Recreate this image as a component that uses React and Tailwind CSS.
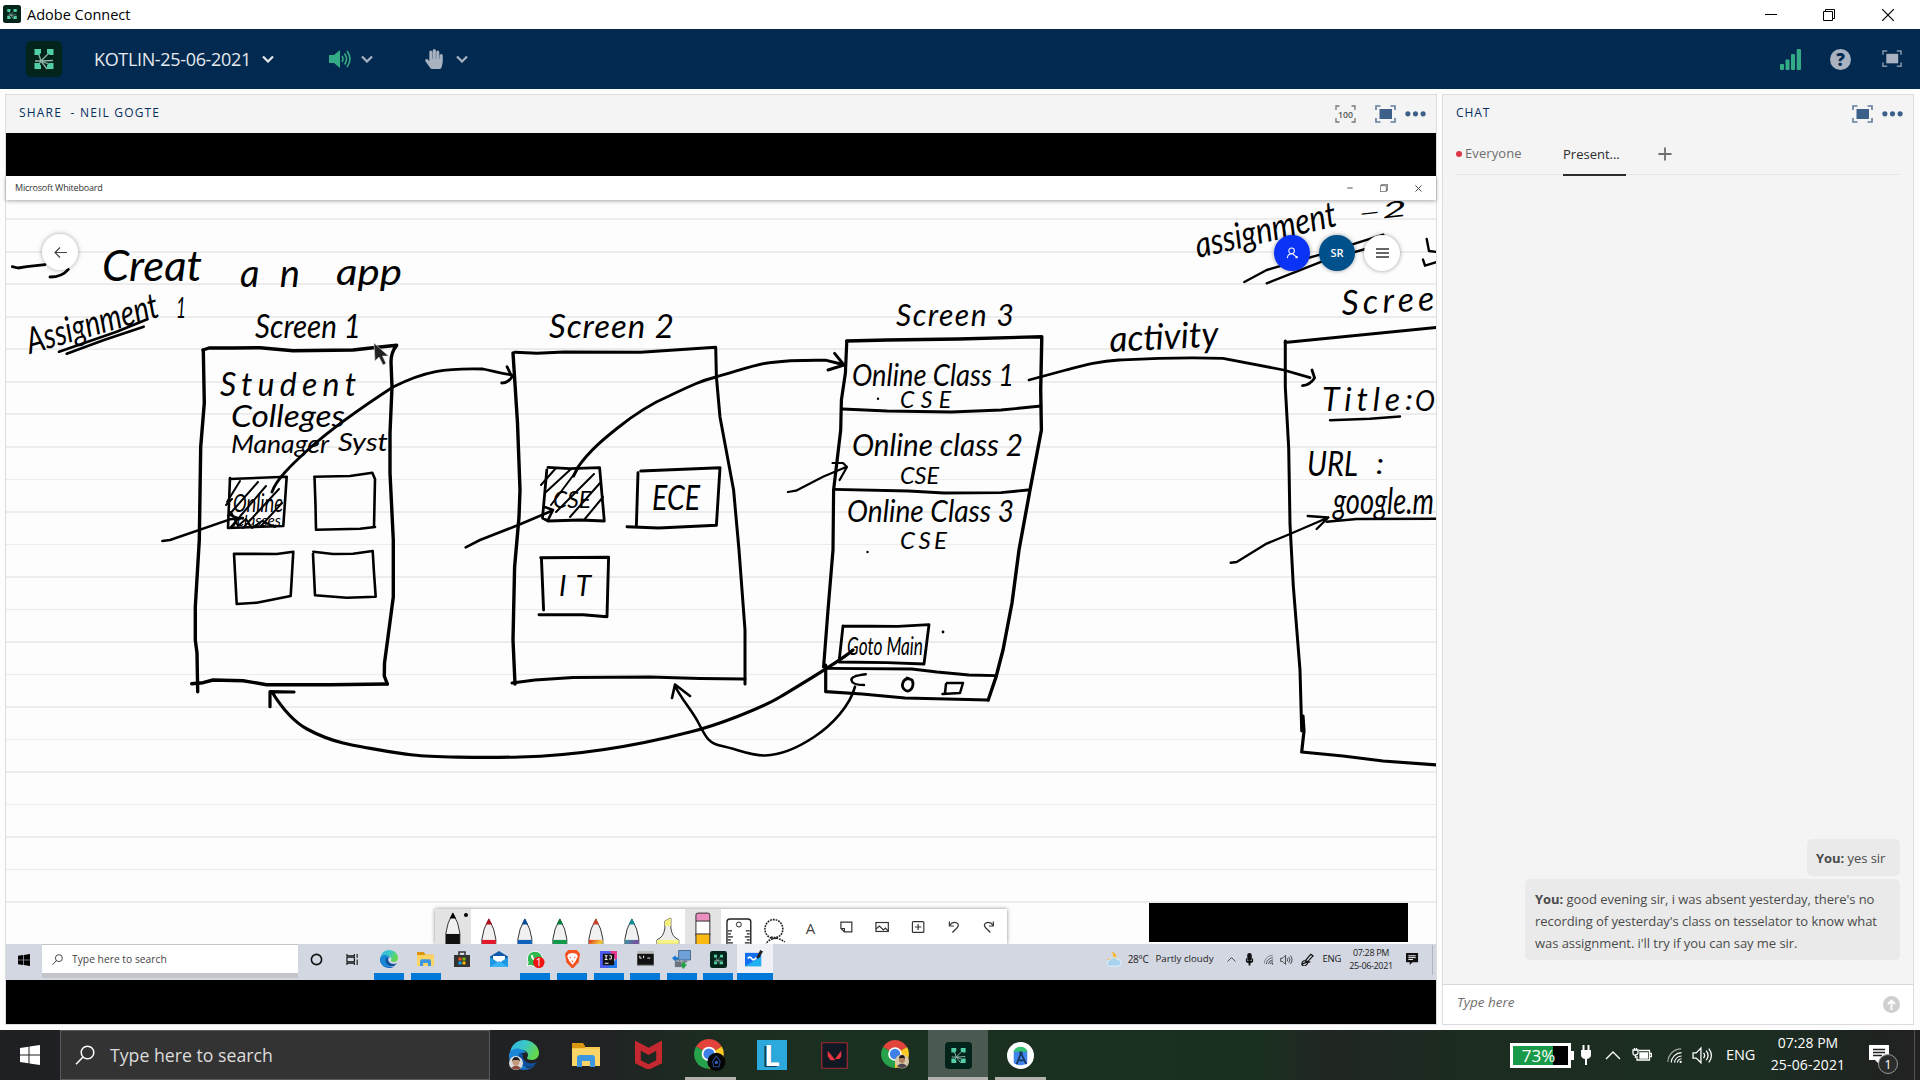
import React from "react";
import { Minus, X, Plus } from "lucide-react";
import { FaHandPaper } from "react-icons/fa";

/* ---------- shared icons ---------- */

function ConnectLogo({ className }) {
  return (
    <svg viewBox="0 0 36 36" className={className}>
      <rect width="36" height="36" rx="5" fill="#02241b" />
      <g stroke="#8fb5a8" strokeWidth="1.3" fill="none">
        <path d="M15 20L24 11M15 20L12 11M15 20L25 24M15 20L12 25M15 20L27 19.500M15 20H9M15 20L21 28" />
      </g>
      <g fill="#53cfa8">
        <path d="M8.500 8h6.500v4l-2 2H8.500z" />
        <path d="M21 8h6.500v6h-3.500l-3-2z" />
        <path d="M8.500 22h4l2.500 2.500V28H8.500z" />
        <path d="M21 24l2.500-2h4v6H21z" />
      </g>
    </svg>
  );
}

function Chevron({ className }) {
  return (
    <svg viewBox="0 0 12 8" className={className} fill="none" stroke="currentColor" strokeWidth="2.2">
      <path d="M1 1.5l5 5 5-5" />
    </svg>
  );
}

function Fullscreen({ className }) {
  return (
    <svg viewBox="0 0 21 18" className={className} fill="none" stroke="currentColor">
      <path strokeWidth="1.6" opacity="0.8" d="M5.500 1H1v4M15.500 1H20v4M5.500 17H1v-4M15.500 17H20v-4" />
      <rect x="4.500" y="4" width="12.500" height="10" fill="currentColor" stroke="none" />
    </svg>
  );
}

function Dots({ className }) {
  return (
    <svg viewBox="0 0 22 6" className={className} fill="currentColor">
      <circle cx="3" cy="3" r="2.700" />
      <circle cx="11" cy="3" r="2.700" />
      <circle cx="19" cy="3" r="2.700" />
    </svg>
  );
}

function Restore({ className }) {
  return (
    <svg viewBox="0 0 12 12" className={className} fill="none" stroke="currentColor">
      <path d="M.5 2.5h9v9h-9zM2.500 2.500v-2h9v9h-2" />
    </svg>
  );
}

function Windows({ className }) {
  return (
    <svg viewBox="0 0 20 20" className={className} fill="currentColor">
      <path d="M0 3l8.500-1.300v7.800H0zM9.500 1.500L20 0v9.500H9.500zM0 10.500h8.500v7.800L0 17zM9.500 10.500H20V20L9.500 18.500z" />
    </svg>
  );
}

function SearchGlyph({ className }) {
  return (
    <svg viewBox="0 0 20 20" className={className} fill="none" stroke="currentColor" strokeWidth="1.5">
      <circle cx="12.500" cy="7.500" r="6.300" />
      <path d="M8 12l-7 7.300" />
    </svg>
  );
}

function Speaker({ className }) {
  return (
    <svg viewBox="0 0 20 18" className={className} fill="none" stroke="currentColor" strokeWidth="1.2">
      <path d="M1 6.500h3L8.500 2v14L4 11.500H1z" />
      <path d="M11 6.500q2 2.500 0 5M13.500 4.500q3.600 4.500 0 9M16 2.500q5 6.500 0 13" />
    </svg>
  );
}

function Wifi({ className }) {
  return (
    <svg viewBox="0 0 18 18" className={className} fill="none" stroke="currentColor" strokeWidth="1.2">
      <path d="M2 16A14 14 0 0 1 16 2" opacity="0.6" />
      <path d="M5.500 16.500A11 11 0 0 1 16.500 6M9 16.500A8 8 0 0 1 16.500 9.500M12 16.500a5 5 0 0 1 4.500-4" />
      <circle cx="15.500" cy="15.800" r="1.200" fill="currentColor" stroke="none" />
    </svg>
  );
}

function Caret({ className }) {
  return (
    <svg viewBox="0 0 16 9" className={className} fill="none" stroke="currentColor" strokeWidth="1.4">
      <path d="M1 8l7-7 7 7" />
    </svg>
  );
}

function Edge({ className }) {
  return (
    <svg viewBox="0 0 30 30" className={className}>
      <defs>
        <linearGradient id="edgeA" x1="0" y1="0" x2="1" y2="0.4">
          <stop offset="0" stopColor="#2fb5e8" />
          <stop offset="0.55" stopColor="#3cc8c4" />
          <stop offset="1" stopColor="#63d84c" />
        </linearGradient>
      </defs>
      <path d="M1 13C2 5 8 0 15 0c8 0 15 6 15 13 0 4-3 7-7 7-3 0-5-1-5-2 0-1 1-1 1-3 0-3-3-5-7-5-5 0-9 2-11 3z" fill="url(#edgeA)" />
      <path d="M0 15c1-5 6-7 11-6-4 2-5 6-4 10 1 6 6 10 12 9 3 0 6-2 8-4-3 4-7 6-12 6C6 30 0 23 0 15z" fill="#1769c4" />
      <path d="M0 15c1-5 6-7 11-6 3 .5 5 2 6 4-4-1-7 1-7 5 0 5 4 9 9 9-8 4-19-1-19-12z" fill="#1c86d6" />
      <path d="M10 14c-2 5 0 12 9 13 4 0 7-2 9-5-4 2-9 2-12-1-2-2-3-5-2-7 0 0-3-2-4 0z" fill="#0f4f9f" />
    </svg>
  );
}

function Folder({ className }) {
  return (
    <svg viewBox="0 0 28 24" className={className}>
      <path d="M0 1h11l2 3h15v19H0z" fill="#f7c84a" />
      <path d="M0 0h11l2 3v2H0z" fill="#d9960f" />
      <path d="M0 6h28v17H0z" fill="#fcd568" />
      <path d="M5 24V15q0-3 3-3h12q3 0 3 3v9h-5v-6h-8v6z" fill="#3d96e0" />
    </svg>
  );
}

function Chrome({ className, badge }) {
  return (
    <svg viewBox="0 0 30 30" className={className}>
      <path d="M14 14L1.900 7A14 14 0 0 1 26.100 7z" fill="#e2433a" />
      <path d="M14 14l12.100-7A14 14 0 0 1 14 28z" fill="#fbc924" />
      <path d="M14 14v14A14 14 0 0 1 1.900 7z" fill="#27a14c" />
      <circle cx="14" cy="14" r="6.800" fill="#fff" />
      <circle cx="14" cy="14" r="5.200" fill="#3f7fe8" />
      {badge}
    </svg>
  );
}

/* ---------- whiteboard drawing ---------- */

const strokes = [
  // frame of the first phone screen
  ["M203 350L209 348L233 348L260 347.700L293 350.700L353 350L373 347.700L396.700 345.300Q391 352 391 362L392 387L390 433L390 473L393.300 540L393.300 597L388 637L384.500 663L384.300 676L387.300 684", 3.4],
  ["M203.300 350L204.300 403L200.700 447L199.300 540L195.300 607L195.300 640L197 653L197.700 691.700", 3.4],
  ["M191.700 683.700L203 682.700L213 680L243 680.700L266.700 684.700L330 684.700L387.300 684", 3.4],
  ["M229.700 479L286.700 476.700L283.300 526L228 528L230 478", 2.6],
  ["M314.300 476.700L350 476L372.300 472.700L375 479L374 527.300M375 527L360 528.700L316 529.700L315.500 505L314.500 477", 2.6],
  ["M234 553.700L276.700 554L293.300 551.700L290.700 596L256.700 602.700L236.700 604L234 553.700", 2.6],
  ["M313.300 551.700L333 554L353 553.700L372.700 551L374 573L375.700 596.700L346.700 597.700L315 595.300L313 554", 2.6],
  ["M227 502L240 481M228 516L258 482M231 527L266 486M243 528L279 489M260 527L282 503M226 505L232 499M231 512L238 526L246 519L252 528L262 521L275 527", 2],
  // tap arrow and link to the second screen
  ["M162.300 541L170 540L230 519.300L243 518M230 515L238 518L233 526", 2.4],
  ["M272 492C276 480 290 466 310 448S350 415 393 387C425 371 445 368 483 369C493 371 500 373 511.700 375M507 366.700L512 377Q508 383 501.700 383", 2.8],
  // second screen
  ["M515 352.300L537 353.300L564 352L640.700 352.300L715.700 347.300L716.400 377L720 417L733.600 490L739 550L745 630L745 684", 3],
  ["M513 353L517.500 423L520 490L519 517L514.600 567L513 640L515 684", 3.4],
  ["M512 683L535 680L573 677.500L650 677L700 678.500L745 679", 3],
  ["M548 467.300L569.300 468.700L599.600 467.700L604.300 521L580 520L548 521L542.500 518L546.800 470", 2.8],
  ["M541 485L556 468M546 492L571 469M551 505L578 469M556 512L594 474M570 517L600 483M584 520L603 497", 2],
  ["M640.700 471L720 467.700L716.400 525.300L658.600 528L627 526.700M638 472.700L636.400 525", 2.9],
  ["M540.700 557.700L608.600 557.300L607 616.700L583 614.700L539 614.700M541.400 557.700L543.600 610", 2.9],
  ["M465.700 547.300L480 540L518.300 525L552 510.700M544 506.700L553 510L548 520", 2.6],
  ["M573.600 476L578 467C590 450 605 438 617.500 428S650 404 669 396C690 386 700 381 716 377S755 364 769 362.700C790 360 805 360 826.400 360.300L841 364M834.600 353.300L844 365L828 370", 2.9],
  // third screen
  ["M846.800 341L887 340L958.600 339L1041.800 336.700L1040.700 390L1041.400 430L1030 490L1019 550L1012 603L1003 650L996 677L988.200 700", 3.4],
  ["M846.800 341L845.400 373L841.400 400L840.700 430L833.600 490L833 550L828 610L823.600 667M825.700 665L825.700 691.700L862 694L905 698L988 700", 3.2],
  ["M842.500 409L887 411L951 412L1001 410L1041 406M834 489.300L908.600 491L944 493L1001 492.700L1028 490M828 668.300L912 669L937 672L969 675L996 675.700", 2.800],
  ["M787.900 492L796 490.700L823 476.700L846.800 466.700M832.500 463L843 463L847 467L839.600 480", 2.2],
  ["M843 626L898 626.300L929 624.700L924 664L887 662.700L839 662L843 626", 2.8],
  ["M865.700 674.300Q851 676 851.400 680Q852 685 864 685M946 684L945 693M942.500 694L960 693L963 683L947 683", 2.5],
  ["M908.500 678.500C903 679 900 686 905 690S915 686 912 680L907 678", 2.8],
  // return links below the screens
  ["M853 650C842 660 800 685 780 697S715 726 690 732C620 750 560 756 520 757S430 757 413 755S355 746 343 743S318 735 307 729S285 713 272 692M270 706.700L270 691.700L294 692", 3.2],
  ["M855 686.700C850 706 832 725 814 737S780 755 765 755.500S737 749 722 746S705 735 698 722S682 700 675 686M672 698L675 684.500L690 696", 2.6],
  // link to the fourth screen
  ["M1029 380L1066 370C1085 365 1100 361 1119 360S1176 356.700 1223 358.300L1283.600 370L1310 377.700M1312 370L1314.600 378Q1310 385 1302.500 385.700", 2.8],
  ["M1285 342.600L1353 335.800L1437 327.300M1285.300 341L1285.300 387L1288.700 448L1290 524L1293.300 586L1300 670L1301.700 731", 3],
  ["M1303 716L1304 731L1301.700 752L1343 756L1383 761L1437 765", 3.2],
  ["M1230.700 562.700L1236.700 562L1266.700 543.600L1290 534L1328.300 517.500M1307.700 516L1328.300 517.500L1316.700 529", 2.4],
  ["M1326.700 521.800L1356.700 519L1437 518.700M1330 420.300L1370 418.800L1400 416.500", 2.4],
  ["M1244.300 282L1266.700 270L1320 254.600L1383.300 234.700M1266.700 283.300L1326.700 259.600L1373 247", 2.4],
  ["M1426.700 239L1429 251L1437 252M1423 259.600L1425 265.700L1437 262", 2.4],
  ["M59 351.700L116.700 331.700L147.300 319.300M66.700 353.700L104 340L143.700 326.700", 2.6],
  ["M12.300 266.700L18 268L26.700 266.700L45 264.700M68.300 269.300Q62 277 50 277", 2.8],
];

// word, x, baseline, width, size, rotation, spread letters instead of widening them
const words = [
  ["Creat", 102, 281, 100, 42, 0],
  ["an", 240, 287, 60, 38, 0, true],
  ["app", 336, 285, 66, 36, 0],
  ["Assignment", 30, 354, 136, 36, -16],
  ["1", 176, 318, 10, 28, 0],
  ["Screen 1", 255, 338, 106, 33, 0],
  ["Student", 220, 396, 136, 32, 0, true],
  ["Colleges", 231, 427, 114, 31, 0],
  ["Manager", 231, 453, 98, 26, 0],
  ["Syst", 338, 451, 50, 26, 0],
  ["Online", 233, 512, 50, 26, 0],
  ["classes", 237, 526, 44, 16, 0],
  ["Screen 2", 549, 338, 125, 33, 0, true],
  ["CSE", 553, 508, 38, 24, 0],
  ["ECE", 652, 510, 48, 34, 0],
  ["IT", 559, 596, 32, 28, 0, true],
  ["Screen 3", 896, 326, 118, 30, 0, true],
  ["Online Class 1", 852, 386, 162, 30, 0],
  ["CSE", 900, 408, 51, 23, 0, true],
  ["Online class 2", 852, 456, 171, 30, 0],
  ["CSE", 900, 484, 39, 23, 0],
  ["Online Class 3", 847, 522, 167, 30, 0],
  ["CSE", 900, 549, 47, 24, 0, true],
  ["Goto Main", 847, 655, 76, 26, 0],
  ["activity", 1110, 352, 109, 36, -3],
  ["Scree", 1342, 315, 93, 34, -3, true],
  ["Title", 1322, 411, 78, 32, 0, true],
  [":", 1405, 410, 8, 28, 0],
  ["O", 1415, 411, 20, 28, 0],
  ["URL", 1307, 476, 51, 34, 0],
  [":", 1376, 474, 8, 28, 0],
  ["google.m", 1333, 514, 101, 36, 0],
  ["assignment", 1198, 258, 144, 36, -13],
  ["–2", 1358, 221, 50, 22, -6],
];

function Drawing() {
  return (
    <svg viewBox="6 200 1430 744" className="absolute inset-0 h-full w-full">
      <g fill="none" stroke="#000" strokeLinecap="round" strokeLinejoin="round">
        {strokes.map(([d, w], i) => (
          <path key={i} d={d} strokeWidth={w} />
        ))}
      </g>
      <g fontFamily="Lato, 'Open Sans', sans-serif" fontStyle="italic" fill="#000">
        {words.map(([t, x, y, w, size, r, spread], i) => (
          <text key={i} x={x} y={y} fontSize={size} textLength={w} lengthAdjust={spread ? "spacing" : "spacingAndGlyphs"} transform={`rotate(${r} ${x} ${y})`}>
            {t}
          </text>
        ))}
      </g>
      <circle cx="878" cy="398.700" r="1.200" />
      <circle cx="867.500" cy="552" r="1.200" />
      <circle cx="943" cy="632" r="1.400" />
      <path d="M374 343l1 18 4-4 4 8 3-1.500-3.500-7.500h6z" fill="#222" stroke="#ddd" strokeWidth="0.600" />
    </svg>
  );
}

/* ---------- whiteboard pen tray ---------- */

function Pen({ id, tip, band, tall }) {
  return (
    <svg viewBox="0 0 36 35" className="h-[35px] w-full">
      <defs>
        <linearGradient id={id} x1="0" y1="0" x2="1" y2="1">
          {band.map((c, i) => (
            <stop key={i} offset={band.length > 1 ? i / (band.length - 1) : 0} stopColor={c} />
          ))}
        </linearGradient>
      </defs>
      <g transform={tall ? "translate(0 -6)" : ""}>
        <path d="M11 45V30Q12 20 18 10Q24 20 25 30V45z" fill="#f1f1f1" stroke="#333" strokeWidth="1" />
        <path d="M14.800 15.500L18 9.300L21.200 15.500z" fill={tip} />
        <path d="M11 31h14v14H11z" fill={`url(#${id})`} />
      </g>
    </svg>
  );
}

const toolSvg = "h-[35px] w-full";
const tools = [
  { sel: true, el: <Pen id="p1" tip="#000" band={["#111"]} tall /> },
  { el: <Pen id="p2" tip="#b01020" band={["#e01a2b"]} /> },
  { el: <Pen id="p3" tip="#0a4d9a" band={["#0f62bb"]} /> },
  { el: <Pen id="p4" tip="#0a7a3a" band={["#119a4b"]} /> },
  { el: <Pen id="p5" tip="#c8452a" band={["#e03020", "#f3c83c", "#2b9a55"]} /> },
  { el: <Pen id="p6" tip="#148a98" band={["#31a0a0", "#74509c", "#4aa2c2"]} /> },
  {
    el: (
      <svg viewBox="0 0 36 35" className={toolSvg}>
        <path d="M15 19L15 12L21 9L21 19Q22 28 29 31V35H7V31Q14 28 15 19z" fill="#ededed" stroke="#444" />
        <path d="M15 17V12l6-3v8z" fill="#f5ef7b" />
        <path d="M7 31h22v4H7z" fill="#f8f585" />
      </svg>
    ),
  },
  {
    sel: true,
    el: (
      <svg viewBox="0 0 36 35" className={toolSvg} stroke="#333">
        <rect x="11" y="4" width="14" height="9" rx="2" fill="#ec8fc0" />
        <rect x="11" y="12" width="14" height="14" fill="#fff" />
        <rect x="11" y="25" width="14" height="14" fill="#fdb913" />
      </svg>
    ),
  },
  {
    el: (
      <svg viewBox="0 0 36 35" className={toolSvg} fill="none" stroke="#222" strokeWidth="1.400">
        <path d="M6 35V13q0-3 3-3h18q3 0 3 3v22" />
        <circle cx="18" cy="15.500" r="2.500" strokeWidth="1" />
        <path strokeWidth="1.200" d="M7 22h4M7 25h3M7 28h5M7 31h3M7 34h5M29 22h-4M29 25h-3M29 28h-5M29 31h-3M29 34h-5" />
      </svg>
    ),
  },
  {
    el: (
      <svg viewBox="0 0 36 35" className={toolSvg} fill="none" stroke="#222" strokeWidth="1.600">
        <path strokeDasharray="1.800 1" d="M20 29A9 9.500 0 1 1 24 26C20 30 12 29 9 35M14 28Q22 29 28 33" />
      </svg>
    ),
  },
  { el: <span className="pt-1 text-[15px] text-[#444]">A</span> },
  {
    el: (
      <svg viewBox="0 0 36 35" className={toolSvg} fill="none" stroke="#333" strokeWidth="1.200">
        <path d="M13 13h11v10H16.500l-3.500-3.500zM13 19.500h3.500V23" />
      </svg>
    ),
  },
  {
    el: (
      <svg viewBox="0 0 36 35" className={toolSvg} fill="none" stroke="#333" strokeWidth="1.200">
        <rect x="12" y="13.500" width="12.500" height="9" />
        <path d="M12 20l3.500-3 4 4 2-2 3 3" />
      </svg>
    ),
  },
  {
    el: (
      <svg viewBox="0 0 36 35" className={toolSvg} fill="none" stroke="#333" strokeWidth="1.200">
        <rect x="12.500" y="12.500" width="11.500" height="11" rx="1" />
        <path d="M15 18h6.500M18.250 15v6" />
      </svg>
    ),
  },
  {
    el: (
      <svg viewBox="0 0 36 35" className={toolSvg} fill="none" stroke="#333" strokeWidth="1.200">
        <path d="M13.500 12.500v4.500h4.500M13.500 16.500Q17 12 21 14T19 21L16.500 23.500" />
      </svg>
    ),
  },
  {
    el: (
      <svg viewBox="0 0 36 35" className={toolSvg} fill="none" stroke="#333" strokeWidth="1.200">
        <path d="M22.500 12.500v4.500h-4.500M22.500 16.500Q19 12 15 14T17 21L19.500 23.500" />
      </svg>
    ),
  },
];

/* ---------- shared desktop's task bar ---------- */

const sharedApps = [
  { el: <svg viewBox="0 0 14 14" className="size-[13px]" fill="none" stroke="#111" strokeWidth="1.700"><circle cx="7" cy="7" r="5.500" /></svg> },
  { el: <svg viewBox="0 0 14 14" className="size-[13px]" fill="none" stroke="#111" strokeWidth="1.200"><path d="M1 1v2h8V1M1 13v-2h8v2M1 4.500h8v5H1zM12 1v4M12 7v6" /></svg> },
  { on: true, el: <Edge className="size-[18px]" /> },
  { on: true, el: <Folder className="w-[17px]" /> },
  { el: <svg viewBox="0 0 18 18" className="size-[18px]"><path d="M6 5V2h6v3" fill="none" stroke="#333" strokeWidth="1.500" /><path d="M1 5h16v12H1z" fill="#333" /><path d="M5.500 7.500h3v3h-3z" fill="#f25022" /><path d="M9.500 7.500h3v3h-3z" fill="#7fba00" /><path d="M5.500 11.500h3v3h-3z" fill="#00a4ef" /><path d="M9.500 11.500h3v3h-3z" fill="#ffb900" /></svg> },
  { el: <svg viewBox="0 0 18 18" className="size-[18px]"><path d="M0 6.500L9 1l9 5.500V9H0z" fill="#0f5ca8" /><path d="M3 6h12v8H3z" fill="#fff" /><path d="M0 7l9 6 9-6v10H0z" fill="#1f98e4" /><path d="M0 17l9-6 9 6z" fill="#39b4f4" /></svg> },
  { on: true, el: <svg viewBox="0 0 20 20" className="size-[19px]"><path d="M1 17l1.300-4A8 8 0 1 1 5 16z" fill="#2fb84f" stroke="#fff" strokeWidth="1" /><path d="M5.500 5.500c1-1.500 2 0 2.300 1.300-.5 1-.5 1.200 1.500 2.700 1 .5 1.500-1 2.500-.5 1.500 1 2 2-.5 2.500-3 .5-7-3-5.800-6z" fill="#fff" /><circle cx="13.500" cy="13" r="6" fill="#f01212" /><text x="13.500" y="17" fontSize="11" fill="#fff" textAnchor="middle" fontFamily="Open Sans, sans-serif">1</text></svg> },
  { on: true, el: <svg viewBox="0 0 18 20" className="w-[17px]"><path d="M4.500 0h9L17 4l-1.500 9L9 20l-6.500-7L1 4z" fill="#f4511e" /><path d="M5 4l4-.8 4 .8 1.500 2.500-2 5-3.500 4.500-3.500-4.500-2-5z" fill="#fff" /><path d="M5.500 7l2 1-1 1zM12.500 7l-2 1 1 1zM7.500 11.500h3L9 13z" fill="#f4511e" /></svg> },
  { on: true, el: <svg viewBox="0 0 18 18" className="size-[17px]"><path d="M0 0h12v18H0z" fill="#4b5bf0" /><path d="M10 0h8v12z" fill="#e8378f" /><path d="M8 18h10V8z" fill="#1c7df0" /><path d="M3 3h12v12H3z" fill="#111" /><path d="M5 5h3M6.500 5v4M5 9h3M10 5h2v3.500H9.500M5 13h4" stroke="#fff" fill="none" /></svg> },
  { on: true, el: <svg viewBox="0 0 18 16" className="w-[17px]"><path d="M0 0h18v15H0z" fill="#111" stroke="#777" /><path d="M0 0h18v3H0z" fill="#bbb" /><path d="M3 5v2.500h2M7 5v2.500M11 7.500h3" stroke="#fff" fill="none" /></svg> },
  { on: true, el: <svg viewBox="0 0 20 20" className="size-[19px]"><path d="M7 .5h12.500v10H7z" fill="#6da1d8" stroke="#47678a" /><path d="M11 11h5v2h-5z" fill="#778" /><path d="M0 8.500l4-3v2h3v3H4v2z" fill="#1876d2" /><path d="M10 13h4v2h2l-4 5-4-5h2z" fill="#24a148" /><path d="M3 12h7v6H3z" fill="#6b7480" /><path d="M4.500 12q2-4 4 0" fill="none" stroke="#6b7480" strokeWidth="1.200" /></svg> },
  { on: true, el: <ConnectLogo className="size-[17px]" /> },
  { on: true, active: true, el: <svg viewBox="0 0 20 18" className="w-[19px]"><path d="M0 3h17v14H0z" fill="#116ff0" /><path d="M0 17L17 7v10z" fill="#22b1f0" /><path d="M3 9q2-3 4 0t5-1" fill="none" stroke="#fff" strokeWidth="1.800" /><path d="M12 8l4-8 3 1.500-4.500 7.500z" fill="#222" /></svg> },
];

function SharedTaskbar() {
  return (
    <div className="flex h-[36px] bg-[#d3d7e2] text-[#222]">
      <div className="flex w-[36px] items-center justify-center pb-[5px] text-black">
        <Windows className="size-[12px]" />
      </div>
      <div className="h-[34px] w-[256px] bg-[#c4c5c8]">
        <div className="mt-px flex h-[28px] items-center bg-white pl-[10px] pt-px">
          <SearchGlyph className="size-[11px]" />
          <span className="ml-[9px] text-[10.300px] text-[#444]">Type here to search</span>
        </div>
      </div>
      <div className="flex w-[475px] justify-between">
        {sharedApps.map((a, i) => (
          <div key={i} className={a.active ? "flex w-[36px] flex-col items-center bg-[#eef0f5]" : "flex w-[36px] flex-col items-center"}>
            <div className="flex h-[29px] items-center pt-px">{a.el}</div>
            {a.on && <div className={a.active ? "h-[7px] w-[36px] bg-[#0078d7]" : "h-[7px] w-[30px] bg-[#0078d7]"} />}
          </div>
        ))}
      </div>
      <div className="flex h-[31px] flex-1 items-center justify-end">
        <svg viewBox="0 0 18 16" className="w-[17px]"><circle cx="7" cy="5" r="5" fill="#f7b62a" /><circle cx="4.500" cy="3.500" r="4" fill="#d3d7e2" /><path d="M4 15a3.500 3.500 0 0 1 1-6.500 4.500 4.500 0 0 1 8-.5 3.500 3.500 0 0 1 1 7z" fill="#a9d3ee" stroke="#e6f3fb" /></svg>
        <span className="ml-[6px] text-[10px] tracking-[-0.300px]">28°C</span>
        <span className="ml-[7px] text-[9.700px]">Partly cloudy</span>
        <Caret className="ml-[13px] w-[9px]" />
        <svg viewBox="0 0 10 14" className="ml-[9px] w-[9px]" fill="#111"><rect x="2.500" width="5" height="9" rx="2.500" /><path d="M1 6h1.500v3h5V6H9v4L6 11.500V14H4v-2.500L1 10z" /></svg>
        <Wifi className="ml-[9px] w-[11px]" />
        <Speaker className="ml-[6px] w-[13px]" />
        <svg viewBox="0 0 14 14" className="ml-[8px] w-[13px]" fill="none" stroke="#111" strokeWidth="1.300"><path d="M4.500 8.500l6-7 2.500 1.500-6.500 7zM1 12.500q0-5 4-4t1 4-5 0q3-3 9-3" /></svg>
        <span className="ml-[9px] text-[9.500px] tracking-[-0.300px]">ENG</span>
        <div className="ml-[7px] flex w-[46px] flex-col items-center pb-[2px] text-[9px] leading-[13px] tracking-[-0.350px]">
          <span>07:28 PM</span>
          <span>25-06-2021</span>
        </div>
        <svg viewBox="0 0 14 13" className="ml-[12px] w-[13px]"><path d="M0 0h13v10H7l-3 3v-3H0z" fill="#111" /><path d="M2.500 3h8M2.500 5h8M2.500 7h5" stroke="#fff" /></svg>
        <div className="ml-[13px] mr-[3px] h-[30px] w-px bg-[#b0b4bf]" />
      </div>
    </div>
  );
}

/* ---------- panels ---------- */

function SharePod() {
  return (
    <section className="flex h-[931px] w-[1432px] flex-col border border-[#dcdcdc]">
      <header className="flex h-[38px] items-center bg-[#f4f4f4] pl-[13px] pr-[10px] text-[#06305f]">
        <span className="flex-1 whitespace-pre pb-[2px] text-[12px] font-medium tracking-[1.180px]">SHARE  - NEIL GOGTE</span>
        <svg viewBox="0 0 21 18" className="mr-[19px] w-[21px] text-[#777]" fill="none" stroke="currentColor">
          <path strokeWidth="1.300" d="M4.500 1H1v4M16.500 1H20v4M4.500 17H1v-4M16.500 17H20v-4" />
          <text x="10.500" y="12.500" textAnchor="middle" fontSize="9" textLength="15" lengthAdjust="spacingAndGlyphs" fontWeight="600" fill="#555" stroke="none">100</text>
        </svg>
        <Fullscreen className="mr-[9px] w-[21px] text-[#3c6089]" />
        <Dots className="w-[21px] text-[#3c6089]" />
      </header>
      <div className="h-[43px] bg-black" />
      <div className="z-10 flex h-[24px] items-center bg-white pl-[9px] pr-[12px] text-[#333] shadow-[0_1px_4px_rgba(0,0,0,0.350)]">
        <span className="flex-1 text-[9px] tracking-[-0.200px]">Microsoft Whiteboard</span>
        <Minus className="mr-[26px] size-[8px]" strokeWidth={2.500} />
        <Restore className="mr-[25px] size-[8px]" />
        <X className="size-[11px]" strokeWidth={2} />
      </div>
      <div className="relative h-[744px] overflow-hidden bg-[#fdfdfd] bg-[repeating-linear-gradient(to_bottom,transparent_0px,transparent_30.500px,#ececec_30.500px,#ececec_32.500px)] bg-[position:0_-12px]">
        <Drawing />
        <div className="absolute left-[36px] top-[34px] flex size-[36px] items-center justify-center rounded-full bg-white shadow-[0_0_5px_rgba(0,0,0,0.350)]">
          <svg viewBox="0 0 13 11" className="w-[13px]" fill="none" stroke="#444" strokeWidth="1.200"><path d="M13 5.500H1M6 .5l-5 5 5 5" /></svg>
        </div>
        <div className="absolute left-[1268px] top-[35px] flex gap-[9px]">
          <div className="flex size-[36px] items-center justify-center rounded-full bg-[#0a33f5] shadow-[0_0_4px_rgba(0,0,0,0.400)]">
            <svg viewBox="0 0 14 14" className="w-[12px]" fill="none" stroke="#fff" strokeWidth="1.200"><circle cx="6.500" cy="4.500" r="3.300" /><path d="M1.500 13q.5-5 5-5 2 0 3 1.500M9 9l4 3.500M11 12.500h2v-2" /></svg>
          </div>
          <div className="flex size-[36px] items-center justify-center rounded-full bg-[#00508c] text-[11px] font-semibold text-white shadow-[0_0_4px_rgba(0,0,0,0.400)]">SR</div>
          <div className="flex size-[36px] flex-col items-center justify-center gap-[2.500px] rounded-full bg-white shadow-[0_0_4px_rgba(0,0,0,0.400)]">
            <div className="h-[1.500px] w-[13px] bg-[#666]" />
            <div className="h-[1.500px] w-[13px] bg-[#666]" />
            <div className="h-[1.500px] w-[13px] bg-[#666]" />
          </div>
        </div>
        <div className="absolute bottom-0 left-[429px] grid w-[572px] grid-cols-16 bg-white shadow-[0_0_4px_rgba(0,0,0,0.450)]">
          {tools.map((t, i) => (
            <div key={i} className={t.sel ? "flex h-[35px] items-center justify-center overflow-hidden bg-[#e3e3e3]" : "flex h-[35px] items-center justify-center overflow-hidden"}>
              {t.el}
            </div>
          ))}
          <div className="absolute left-[29px] top-[4px] size-[4px] rounded-full bg-black" />
        </div>
        <div className="absolute bottom-[2px] left-[1143px] h-[39px] w-[259px] bg-black" />
      </div>
      <SharedTaskbar />
      <div className="flex-1 bg-black" />
    </section>
  );
}

function ChatPod() {
  return (
    <section className="flex h-[931px] w-[472px] flex-col border border-[#dcdcdc] bg-[#f4f4f4]">
      <header className="flex h-[38px] items-center pl-[13px] pr-[10px] text-[#06305f]">
        <span className="flex-1 pb-[2px] text-[12px] font-medium tracking-[0.900px]">CHAT</span>
        <Fullscreen className="mr-[9px] w-[21px] text-[#3c6089]" />
        <Dots className="w-[21px] text-[#3c6089]" />
      </header>
      <div className="mx-[13px] flex h-[42px] border-b border-[#e5e5e5] text-[13px]">
        <div className="flex w-[107px] items-center gap-[3px] pt-px text-[#6e6e6e]">
          <div className="size-[6px] rounded-full bg-[#dc3545]" />
          <span className="tracking-[0.100px]">Everyone</span>
        </div>
        <div className="flex h-[43px] w-[63px] items-center border-b-2 border-[#2c2c2c] pt-[2px] text-[#2c2c2c]">
          <span>Present...</span>
        </div>
        <div className="flex flex-1 items-center pl-[29px] pt-px text-[#6e6e6e]">
          <Plus className="size-[20px]" strokeWidth={2.200} />
        </div>
      </div>
      <div className="flex flex-1 flex-col items-end justify-end gap-[3px] pb-[24px] pr-[13px] text-[13px] leading-[22px] tracking-[-0.060px] text-[#4b4b4b]">
        <div className="flex h-[37px] w-[93px] items-center whitespace-nowrap rounded-[5px] bg-[#eaeaea] pl-[9px]">
          <p><b>You:</b> yes sir</p>
        </div>
        <div className="h-[81px] w-[375px] whitespace-nowrap rounded-[5px] bg-[#eaeaea] py-[9px] pl-[10px]">
          <p><b>You:</b> good evening sir, i was absent yesterday, there's no</p>
          <p>recording of yesterday's class on tesselator to know what</p>
          <p>was assignment. i'll try if you can say me sir.</p>
        </div>
      </div>
      <div className="flex h-[40px] items-center justify-between border-t border-[#d8d8d8] bg-white pl-[14px] pr-[13px] text-[13.500px] italic text-[#6e6e6e]">
        <span className="pb-[4px]">Type here</span>
        <div className="flex size-[17px] items-center justify-center rounded-full bg-[#cfcfcf]">
          <svg viewBox="0 0 9 11" className="w-[9px]" fill="none" stroke="#fff" strokeWidth="1.800"><path d="M4.500 11V2M1 5l3.500-3.500L8 5" /></svg>
        </div>
      </div>
    </section>
  );
}

/* ---------- local task bar ---------- */

const localApps = [
  { el: <div className="relative"><Edge className="size-[30px]" /><svg viewBox="0 0 14 14" className="absolute bottom-0 left-0 size-[14px]"><circle cx="7" cy="7" r="7" fill="#dcdcdc" /><circle cx="7" cy="6" r="3.500" fill="#c49a7c" /><path d="M3 5.500Q3.500 1 7 1t4 4.500L9.500 4h-5z" fill="#1b1b1b" /><path d="M2 12q5-5 10 0-5 3.500-10 0z" fill="#8a4a3a" /></svg></div> },
  { el: <Folder className="w-[28px]" /> },
  { el: <svg viewBox="0 0 28 30" className="w-[27px]"><path d="M0 0h1l13 7L27 0h1v23l-14 7-14-7zM6 10v10l8 4 8-4V10l-8 4.500z" fill="#c5292f" fillRule="evenodd" /></svg> },
  { on: true, el: <Chrome className="size-[32px]" badge={<><circle cx="21" cy="21.500" r="8.500" fill="#050505" /><path d="M21 16l3.500 5-1 5h-5l-1-5z" fill="none" stroke="#274b9a" strokeWidth="1" /><circle cx="21" cy="22" r="1.500" fill="#3565c8" /></>} /> },
  { el: <div className="flex size-[30px] items-center justify-center bg-[#2ba8dc] text-[28px] font-bold leading-none text-white [text-shadow:-2px_1px_0_#0b3c55]">L</div> },
  { el: <svg viewBox="0 0 28 28" className="w-[27px]"><path d="M.8.8h26.400v26.400H.8z" fill="#101823" stroke="#a32a34" strokeWidth="1.200" /><path d="M7 9l8 10h-5l-3-4zM21 9v6l-2 2.500h-4.500z" fill="#ee3542" /></svg> },
  { el: <Chrome className="size-[30px]" badge={<><circle cx="21" cy="21.500" r="7" fill="#d8c8a8" /><circle cx="21" cy="20" r="3" fill="#b0805c" /><path d="M18 19q0-4 3-4t3 4l-1-1h-4z" fill="#1a1a1a" /><path d="M16 26q5-5 10 0-5 4-10 0z" fill="#4a4450" /></>} /> },
  { on: true, active: true, el: <ConnectLogo className="size-[27px]" /> },
  { on: true, el: <svg viewBox="0 0 28 28" className="w-[27px]"><circle cx="14" cy="14" r="14" fill="#fff" /><path d="M7 9h14v13q-7 4-14 0z" fill="#3f83ec" /><path d="M7 9q2-4 7-4t7 4v1H7z" fill="#37c173" /><path d="M14.500 11.500L10 23M14.500 11.500L20 23M11 18q4 2.500 7.500 0" stroke="#16365c" strokeWidth="1.800" fill="none" /><circle cx="14.500" cy="11.500" r="1.800" fill="#16365c" /></svg> },
];

function LocalTaskbar() {
  return (
    <footer className="flex h-[50px] items-center bg-[linear-gradient(90deg,#1e2023_0%,#202224_31%,#1c2d20_37%,#1b3021_45%,#1b2f21_66%,#212623_69%,#1c2c21_76%,#1c2d22_92%,#1e2420_97%,#222_100%)] text-white">
      <div className="flex w-[60px] justify-center"><Windows className="size-[20px]" /></div>
      <div className="flex h-full w-[430px] items-center border border-[#5a5a5a] bg-[#333] pl-[14px]">
        <SearchGlyph className="size-[20px]" />
        <span className="ml-[15px] text-[17.700px] text-[#dcdcdc]">Type here to search</span>
      </div>
      <div className="ml-[3px] flex h-full">
        {localApps.map((a, i) => (
          <div key={i} className="flex h-full w-[62px] justify-center">
            <div className={a.active ? "flex w-[60px] flex-col items-center bg-[#4b5a50]" : "flex w-[51px] flex-col items-center"}>
              <div className="flex h-[47px] items-center justify-center pt-[3px]">{a.el}</div>
              {a.on && <div className="h-[3px] w-full bg-[#b3b1ad]" />}
            </div>
          </div>
        ))}
      </div>
      <div className="flex h-full flex-1 items-center justify-end">
        <div className="flex h-[25px] w-[61px] items-center justify-center border-[3px] border-white bg-[linear-gradient(90deg,#189a48_72%,#000_72%)] pr-[4px] text-[17px] leading-none">
          73%
        </div>
        <div className="h-[9px] w-[3px] bg-white" />
        <svg viewBox="0 0 12 20" className="ml-[6px] w-[12px]" fill="#fff"><path d="M2.500 0h2v5h3V0h2v5H11v5q0 3-4 4v6H5v-6q-4-1-4-4V5h1.500z" /></svg>
        <Caret className="ml-[13px] w-[16px]" />
        <svg viewBox="0 0 20 14" className="ml-[11px] w-[20px]" fill="none" stroke="#fff" strokeWidth="1.300"><path d="M7 2.500h10.500v9.500H5V8M18 5.500h1.500v3H18" /><path d="M8 5h7.500v5H8z" fill="#fff" /><path d="M1 2h5v3q0 1.500-2.500 2T1 5zM2.500 0v2M4.500 0v2M3.500 7v3" /></svg>
        <Wifi className="ml-[14px] w-[17px]" />
        <Speaker className="ml-[9px] w-[21px]" />
        <span className="ml-[13px] text-[14.500px] tracking-[-0.200px]">ENG</span>
        <div className="ml-[13px] flex w-[80px] flex-col items-center whitespace-nowrap pb-[2px] text-[14px] leading-[22.500px]">
          <span>07:28 PM</span>
          <span className="tracking-[0.150px]">25-06-2021</span>
        </div>
        <div className="relative ml-[21px] mr-[16px] w-[29px]">
          <svg viewBox="0 0 20 20" className="w-[20px]"><path d="M0 0h20v15H11v5l-5-5H0z" fill="#fff" /><path d="M4 4.500h12M4 7.500h12M4 10.500h9" stroke="#222" strokeWidth="1.300" /></svg>
          <div className="absolute left-[9px] top-[9px] flex size-[20px] items-center justify-center rounded-full border border-[#999] bg-[#2a2d2b] text-[13px] leading-none">1</div>
        </div>
        <div className="mr-[5px] h-full w-px bg-[#555]" />
      </div>
    </footer>
  );
}

export default function App() {
  return (
    <div className="flex h-[1080px] w-[1920px] flex-col overflow-hidden bg-[#fdfdfd] font-['Open_Sans','Noto_Sans',sans-serif]">
      <div className="flex h-[29px] items-center bg-white pl-[3px] pr-[26px] text-black">
        <ConnectLogo className="mb-[2px] size-[18px]" />
        <span className="ml-[6px] flex-1 text-[14.500px]">Adobe Connect</span>
        <svg viewBox="0 0 12 12" className="mr-[46px] size-[12px]" stroke="currentColor"><path d="M0 5.500h12" /></svg>
        <Restore className="mr-[47px] size-[12px]" />
        <svg viewBox="0 0 12 12" className="size-[12px]" stroke="currentColor" strokeWidth="1.200"><path d="M0 0l12 12M12 0L0 12" /></svg>
      </div>
      <nav className="flex h-[60px] items-center bg-[#02294f] pl-[26px] pr-[18px] text-[#a8b2c0]">
        <ConnectLogo className="size-[36px]" />
        <span className="ml-[32px] w-[168px] whitespace-nowrap text-[18px] font-medium tracking-[-0.340px] text-[#e6e9ee]">KOTLIN-25-06-2021</span>
        <Chevron className="w-[12px] text-[#e6e9ee]" />
        <svg viewBox="0 0 23 18" className="ml-[55px] w-[23px] text-[#33ab84]" fill="none" stroke="currentColor" strokeWidth="1.600"><path d="M0 5h5l6-5v18l-6-5H0z" fill="currentColor" stroke="none" /><path d="M13 6q2 3 0 6M15.500 3.500q4 5.500 0 11M18 1q6 8 0 16" /></svg>
        <Chevron className="ml-[9px] w-[12px]" />
        <FaHandPaper className="ml-[51px] size-[20px]" />
        <Chevron className="ml-[12px] w-[12px]" />
        <div className="flex-1" />
        <svg viewBox="0 0 21 21" className="w-[21px]" fill="#33ab84"><rect y="15" width="4" height="6" rx="1" /><rect x="5.500" y="10.500" width="4" height="10.500" rx="1" /><rect x="11" y="5" width="4" height="16" rx="1" /><rect x="16.700" width="4.300" height="21" rx="1" /></svg>
        <div className="ml-[29px] flex size-[21px] items-center justify-center rounded-full bg-[#a8b2c0] text-[17px] font-extrabold leading-none text-[#02294f]">?</div>
        <Fullscreen className="ml-[31px] w-[20px]" />
      </nav>
      <main className="flex h-[941px] gap-[5px] pl-[5px] pt-[5px]">
        <SharePod />
        <ChatPod />
      </main>
      <LocalTaskbar />
    </div>
  );
}
